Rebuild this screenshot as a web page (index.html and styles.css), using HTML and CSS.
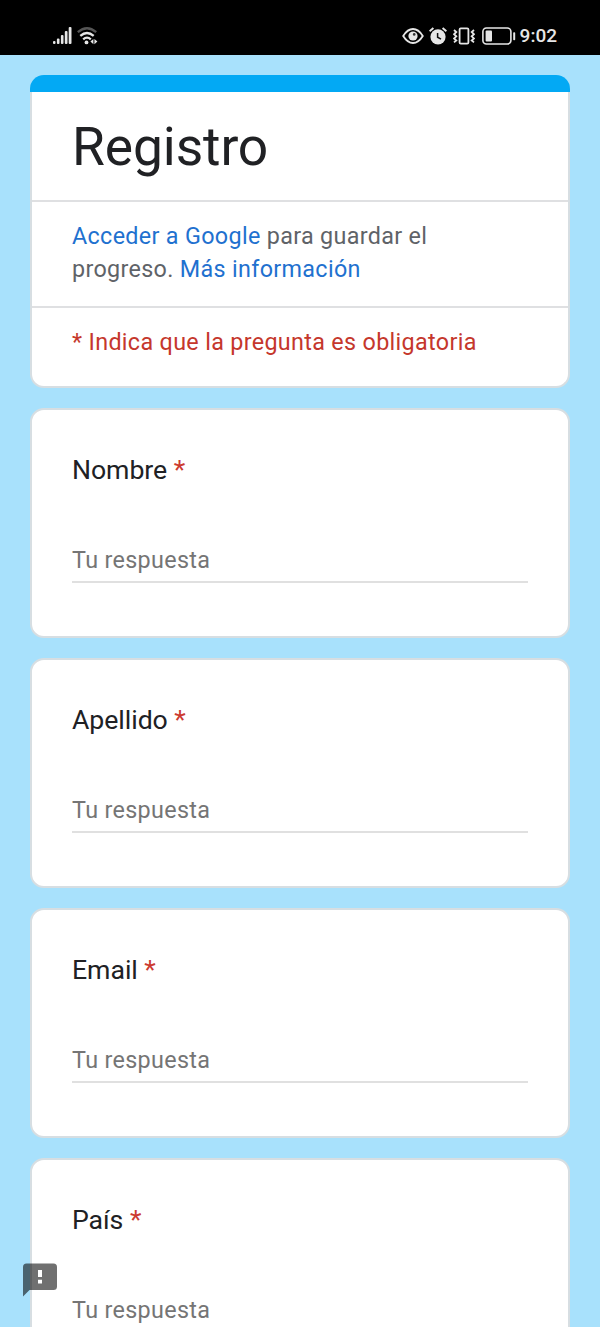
FILE: index.html
```html
<!DOCTYPE html>
<html lang="es">
<head>
    <meta charset="UTF-8">
    <meta name="viewport" content="width=device-width, initial-scale=1.0">
    <title>Registro</title>
    <link rel="stylesheet" href="styles.css">
</head>
<body>
    <!-- Phone status bar -->
    <div class="status_bar">
        <div class="status_left">
            <svg class="signal" width="19" height="18" viewBox="0 0 19 18" fill="#e6e6e6">
                <rect x="0" y="14" width="2.5" height="3" rx="1"/>
                <rect x="3.9" y="11.5" width="2.6" height="5.5" rx="1"/>
                <rect x="7.9" y="8" width="2.6" height="9" rx="1"/>
                <rect x="11.8" y="4" width="2.7" height="13" rx="1"/>
                <rect x="15.7" y="0" width="2.8" height="17" rx="1"/>
            </svg>
            <svg width="21" height="18" viewBox="0 0 21 18" fill="none" stroke="#e6e6e6" stroke-width="2.3">
                <path d="M.8 5.2Q10 -2.8 19.2 5.2" stroke="#555"/>
                <path d="M3.3 8.9Q10 3 16.7 8.9"/>
                <path d="M6.2 12.3Q10 8.9 13.8 12.3"/>
                <circle cx="9.5" cy="15.4" r="1.9" fill="#e6e6e6" stroke="none"/>
                <path d="M16.4 12v5.2l-3-2.6zM17.4 12v5.2l3-2.6z" fill="#e6e6e6" stroke="none"/>
            </svg>
        </div>
        <div class="status_right">
            <svg width="22" height="18" viewBox="0 0 22 18">
                <path d="M1.2 9Q5.5 2 11 2T20.8 9Q16.5 16 11 16T1.2 9z" fill="none" stroke="#e6e6e6" stroke-width="1.8"/>
                <circle cx="11" cy="9" r="4.6" fill="#e6e6e6"/>
                <circle cx="12.2" cy="7.4" r="1.3" fill="#333"/>
            </svg>
            <svg class="alarm" width="18" height="18" viewBox="0 0 18 18">
                <circle cx="9" cy="9.8" r="7.6" fill="#e6e6e6"/>
                <path d="M.6 4.3L4.4 1.1M17.4 4.3L13.6 1.1" stroke="#e6e6e6" stroke-width="2"/>
                <path d="M8.6 6v4.2l3.4 2" fill="none" stroke="#111" stroke-width="1.5"/>
            </svg>
            <svg class="vibrate" width="22" height="18" viewBox="0 0 22 18" fill="none" stroke="#e6e6e6" stroke-width="1.8">
                <rect x="6.6" y="1.3" width="8.8" height="15.4" rx="1.2"/>
                <path d="M1 3l2.3 2L1 7.3l2.3 2L1 11.5l2.3 2L1 15.4M21 3l-2.3 2L21 7.3l-2.3 2 2.3 2.2-2.3 2 2.3 1.9"/>
            </svg>
            <svg class="battery" width="34" height="18" viewBox="0 0 34 18">
                <rect x=".9" y="1" width="28" height="16" rx="3.5" fill="none" stroke="#e6e6e6" stroke-width="1.6"/>
                <rect x="3.6" y="3.6" width="6.4" height="10.8" rx="1" fill="#e6e6e6"/>
                <rect x="31.2" y="5.2" width="2" height="8" rx=".8" fill="#e6e6e6"/>
            </svg>
            <span class="clock">9:02</span>
        </div>
    </div>

    <div class="form">
        <!-- Form title and notices -->
        <div class="header">
            <div class="theme_strip"></div>
            <div class="header_card">
                <h1>Registro</h1>
                <p class="account"><a>Acceder a Google</a> para guardar el<br>progreso. <a>Más información</a></p>
                <p class="required_note">* Indica que la pregunta es obligatoria</p>
            </div>
        </div>

        <!-- Questions -->
        <div class="card">
            <label class="question" for="nombre">Nombre <span>*</span></label>
            <input id="nombre" type="text" placeholder="Tu respuesta">
        </div>
        <div class="card">
            <label class="question" for="apellido">Apellido <span>*</span></label>
            <input id="apellido" type="text" placeholder="Tu respuesta">
        </div>
        <div class="card">
            <label class="question" for="email">Email <span>*</span></label>
            <input id="email" type="text" placeholder="Tu respuesta">
        </div>
        <div class="card">
            <label class="question" for="pais">País <span>*</span></label>
            <input id="pais" type="text" placeholder="Tu respuesta">
        </div>
    </div>

    <!-- Report button -->
    <div class="report">
        <svg width="34" height="34" viewBox="0 0 34 34">
            <path d="M3.5 .5H30.5Q34 .5 34 4V23.5Q34 27 30.5 27H6.5L0 33.5V4Q0 .5 3.5 .5z" fill="#000" fill-opacity=".56"/>
            <path d="M15 7h4v7h-4zM15 16.7h4v3.8h-4z" fill="#fff"/>
        </svg>
    </div>
</body>
</html>
```

FILE: styles.css
```css
*{
    margin: 0;
    padding: 0;
    box-sizing: border-box;
}
body{
    height: 1327px;
    overflow: hidden;
    background-color: #a8e1fc;
    font-family: Roboto, "Liberation Sans", sans-serif;
    color: #202124;
}
.status_bar{
    display: flex;
    justify-content: space-between;
    height: 55px;
    padding: 27px 43px 0 53px;
    background-color: black;
}
.status_left,.status_right{
    display: flex;
    height: 18px;
    align-items: center;
}
.status_left{
    gap: 5px;
}
.alarm{
    margin-left: 5px;
}
.vibrate{
    margin-left: 6px;
}
.battery{
    margin-left: 7px;
}
.clock{
    margin-left: 4px;
    font-size: 19px;
    font-weight: 500;
    line-height: 20px;
    color: #e6e6e6;
}
.form{
    display: flex;
    flex-direction: column;
    gap: 20px;
    padding: 20px 30px 0;
}
.header{
    flex: none;
    height: 313px;
}
.theme_strip{
    height: 17px;
    background-color: #03a9f4;
    border-radius: 14px 14px 0 0;
}
.header_card{
    height: 296px;
    background-color: white;
    border: 2px solid #d7dee2;
    border-top: none;
    border-radius: 0 0 14px 14px;
}
.header_card h1{
    height: 110px;
    padding: 21px 40px 0;
    font-size: 53.33px;
    font-weight: 400;
    line-height: 68px;
    letter-spacing: -0.1px;
    border-bottom: 2px solid #dfe0e2;
}
.account{
    height: 106px;
    padding: 18px 40px 0;
    border-bottom: 2px solid #dfe0e2;
    color: #5f6368;
}
.account,.required_note{
    font-size: 23.33px;
    line-height: 33.33px;
    letter-spacing: 0.33px;
}
.account a{
    color: #1f71cf;
}
.required_note{
    padding: 18px 40px 0;
    color: #c5372c;
}
.card{
    flex: none;
    display: flex;
    flex-direction: column;
    height: 230px;
    padding: 40px 40px 0;
    background-color: white;
    border: 2px solid #d7dee2;
    border-radius: 14px;
}
.question{
    font-size: 26.67px;
    line-height: 40px;
    letter-spacing: -0.05px;
}
.question span{
    color: #cc3a30;
}
.card input{
    height: 40px;
    margin-top: 53px;
    padding-bottom: 5px;
    border: none;
    border-bottom: 2px solid #e0e0e0;
    outline: none;
    background: none;
    font-family: inherit;
    font-size: 23.33px;
    letter-spacing: 0.33px;
    color: #202124;
}
.card input::placeholder{
    color: #757575;
}
.report{
    position: absolute;
    left: 23px;
    top: 1263px;
    height: 34px;
}
```
